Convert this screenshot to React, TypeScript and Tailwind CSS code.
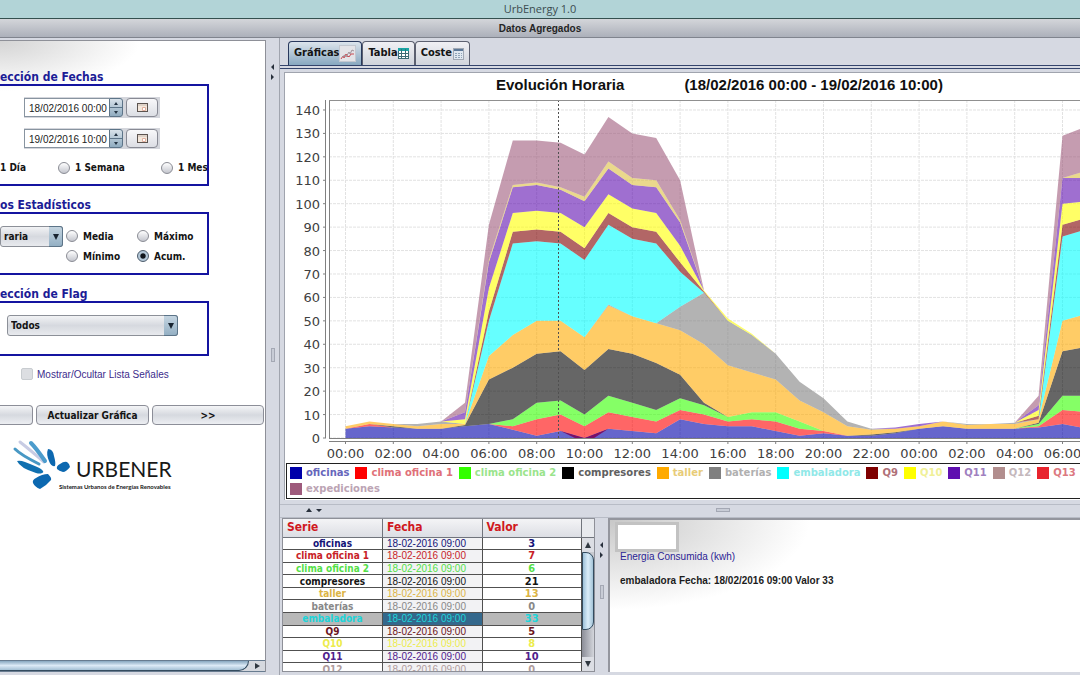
import { useState } from 'react';
import type { ReactNode } from 'react';

type Series = {
  name: string;
  color: string;
  label: string;
  value: number;
};

const SERIES: Series[] = [
  { name: 'oficinas', color: '#0000aa', label: 'text-[#6666bb]', value: 3 },
  { name: 'clima oficina 1', color: '#ff0000', label: 'text-[#e07078]', value: 7 },
  { name: 'clima oficina 2', color: '#33ff00', label: 'text-[#9ae48c]', value: 6 },
  { name: 'compresores', color: '#000000', label: 'text-[#606060]', value: 21 },
  { name: 'taller', color: '#ffaa00', label: 'text-[#e8cc78]', value: 13 },
  { name: 'baterías', color: '#808080', label: 'text-[#b0b0b0]', value: 0 },
  { name: 'embaladora', color: '#00ffff', label: 'text-[#90e8e8]', value: 33 },
  { name: 'Q9', color: '#7f0000', label: 'text-[#b07078]', value: 5 },
  { name: 'Q10', color: '#ffff00', label: 'text-[#f0f098]', value: 8 },
  { name: 'Q11', color: '#5f0fb0', label: 'text-[#a080c0]', value: 10 },
  { name: 'Q12', color: '#b28e8e', label: 'text-[#c4b8bc]', value: 0 },
  { name: 'Q13', color: '#e8242e', label: 'text-[#dc7880]', value: 1 },
];

// Fill of each stacked area, bottom to top
const AREA_COLORS = [
  '#0000aa',
  '#ff0000',
  '#33ff00',
  '#000000',
  '#ffaa00',
  '#808080',
  '#00ffff',
  '#7f0000',
  '#ffff00',
  '#5f0fb0',
  '#dcc040',
  '#9e5a7c',
];

// Cumulative top of each area, one row per hour
const STACK: number[][] = [
  [4, 4, 4, 4, 5, 5, 5, 5, 5, 5, 5, 5],
  [5, 6, 6, 6, 7, 7, 7, 7, 7, 7, 7, 7],
  [4.5, 4.5, 4.5, 5, 6, 6, 6, 6, 6, 6, 6, 6],
  [4, 4, 4, 4, 5, 6, 6, 6, 6, 6, 6, 6],
  [4, 4, 4, 4, 6, 7, 7, 7, 7, 7, 7, 7],
  [5, 5, 5, 5.5, 6, 6, 6, 6, 8, 11, 11, 15],
  [6, 6, 6, 25, 35, 35, 50, 54, 64, 75, 76, 91],
  [3.5, 5, 8, 30, 44, 44, 83, 88, 96, 107, 108, 127],
  [1, 8, 15, 36, 50, 50, 84, 89, 97, 108, 109, 127],
  [3, 10, 16, 37, 50, 50, 83, 88, 96, 106, 107, 126],
  [0, 5, 10, 29, 43, 43, 76, 81, 90, 101, 103, 121],
  [4, 11, 18, 38, 56.5, 57, 91, 96, 104, 115, 118, 137],
  [3, 9, 15, 36, 52, 52, 85, 90, 98, 108, 111, 130],
  [2, 7, 12, 32, 49, 49, 83, 88, 96, 107, 110, 128],
  [8, 12, 17, 27, 46, 56, 71, 75, 82, 92, 93, 110],
  [6, 10, 14, 15, 40, 62, 62, 62.5, 63, 63, 63, 63],
  [5, 7, 9, 9, 31, 50, 50, 50, 51, 51, 51, 51],
  [5, 8, 11, 11, 28, 44, 44, 44, 44.5, 44.5, 44.5, 44.5],
  [3, 7, 11, 11, 25, 36, 36, 36, 36, 36, 36, 36],
  [1, 4, 7, 7, 16, 24, 24, 24, 24, 24, 24, 24],
  [2, 3, 3, 3, 11, 17, 17, 17, 17, 17, 17, 17],
  [1, 1, 1, 1, 5, 7, 7, 7, 7, 7, 7, 7],
  [1, 1, 1, 1.5, 3.5, 4, 4, 4, 4, 4, 4, 4],
  [2, 2, 2, 2.5, 4, 4, 4, 4, 4, 4.5, 4.5, 4.5],
  [4, 4, 4, 4, 5, 5, 5, 5, 5, 6, 6, 6],
  [5, 5, 5, 5, 7, 7, 7, 7, 7, 7, 7, 7],
  [4, 4, 4, 4, 5.5, 6, 6, 6, 6, 6, 6, 6],
  [4, 4, 4, 4, 6, 6, 6, 6, 6, 6, 6, 6],
  [4, 4, 4, 4, 6, 6.5, 6.5, 6.5, 6.5, 6.5, 6.5, 6.5],
  [4.5, 5, 6, 6.5, 8, 8, 8, 9.5, 12, 14, 14, 18],
  [6, 12, 18, 37, 50, 50, 86, 91, 100, 111, 111, 129],
  [4, 11, 18, 39, 53, 53, 89, 94, 101, 111, 114, 133],
  [3, 10, 17, 38, 52, 52, 88, 93, 101, 111, 113, 131],
  [3, 9, 16, 37, 51, 51, 86, 91, 99, 109, 111, 129],
  [2, 8, 15, 36, 50, 50, 84, 89, 97, 107, 109, 127],
];

const PLOT_LEFT = 44;
const PLOT_TOP = 4;
const PLOT_BOTTOM = 342;

const hourX = (h: number) => 60.5 + h * 23.9;
const valueY = (v: number) => PLOT_BOTTOM - v * 2.343;

function areaPoints(index: number) {
  const top = STACK.map((row, h) => `${hourX(h)},${valueY(row[index])}`);
  const bottom = STACK.map(
    (row, h) => `${hourX(h)},${valueY(index === 0 ? 0 : row[index - 1])}`
  ).reverse();
  return [...top, ...bottom].join(' ');
}

const TICKS_Y = Array.from({ length: 15 }, (_, i) => i * 10);
const TICKS_X = Array.from({ length: 18 }, (_, i) => i * 2);

function EvolutionChart() {
  return (
    <svg
      className="block h-[367px] w-full font-['DejaVu_Sans',sans-serif]"
      role="img"
      aria-label="Evolución horaria"
    >
      {TICKS_Y.map((v) => (
        <g key={v}>
          <line x1={PLOT_LEFT} x2="100%" y1={valueY(v)} y2={valueY(v)} stroke="#e2e2e2" strokeDasharray="3 1" />
          <line x1="38" x2="41" y1={valueY(v)} y2={valueY(v)} stroke="#808080" />
          <text x="35" y={valueY(v) + 5} textAnchor="end" fontSize="13" fill="#404040">
            {v}
          </text>
        </g>
      ))}
      {TICKS_X.map((h) => (
        <g key={h}>
          <line x1={hourX(h)} x2={hourX(h)} y1={PLOT_TOP} y2={PLOT_BOTTOM} stroke="#e2e2e2" strokeDasharray="3 1" />
          <line x1={hourX(h)} x2={hourX(h)} y1="345" y2="348" stroke="#808080" />
          <text x={hourX(h)} y="362" textAnchor="middle" fontSize="13" fill="#404040">
            {`${String(h % 24).padStart(2, '0')}:00`}
          </text>
        </g>
      ))}

      {AREA_COLORS.map((color, i) => (
        <polygon key={color} points={areaPoints(i)} fill={color} fillOpacity="0.6" />
      ))}
      <polygon
        points={`${hourX(9)},${valueY(3)} ${hourX(10)},${valueY(0)} ${hourX(9.6)},${valueY(0)}`}
        fill="#7a1068"
      />
      <polygon
        points={`${hourX(10)},${valueY(0)} ${hourX(11)},${valueY(4)} ${hourX(10.4)},${valueY(0)}`}
        fill="#7a1068"
      />

      <line x1="273.5" x2="273.5" y1={PLOT_TOP} y2={PLOT_BOTTOM} stroke="#505050" strokeDasharray="2 2" />
      <path d={`M40.5 ${PLOT_TOP}V${PLOT_BOTTOM}M44.5 ${PLOT_TOP}V${PLOT_BOTTOM}`} stroke="#808080" />
      <line x1={PLOT_LEFT} x2="100%" y1="4.5" y2="4.5" stroke="#909090" />
      <line x1={PLOT_LEFT} x2="100%" y1="342.5" y2="342.5" stroke="#808080" />
      <line x1={PLOT_LEFT} x2="100%" y1="345.5" y2="345.5" stroke="#808080" />
    </svg>
  );
}

function LegendItem({ name, color, label }: { name: string; color: string; label: string }) {
  return (
    <li className="flex shrink-0 items-center gap-1">
      <span className="size-3" style={{ backgroundColor: color }} />
      <span className={label}>{name}</span>
    </li>
  );
}

function Legend() {
  return (
    <div className="ml-px overflow-hidden border border-r-0 border-[#202020] px-[3px] py-[2px] font-['DejaVu_Sans',sans-serif] text-[10px] leading-[14px] font-bold">
      <ul className="flex gap-[6px]">
        {SERIES.map((s) => (
          <LegendItem key={s.name} name={s.name} color={s.color} label={s.label} />
        ))}
      </ul>
      <ul className="mt-[2px] flex">
        <LegendItem name="expediciones" color="#9e5a7c" label="text-[#bca4b4]" />
      </ul>
    </div>
  );
}

function Section({ title, height, children }: { title: string; height: string; children: ReactNode }) {
  return (
    <section className="mb-3 w-[209px]">
      <h2 className="text-[12px] leading-[14px] font-bold text-[#1c1c96]">{title}</h2>
      <div className={`border-2 border-l-0 border-[#1414a0] ${height}`}>{children}</div>
    </section>
  );
}

function Radio({
  name,
  label,
  checked,
  onChange,
}: {
  name: string;
  label: string;
  checked: boolean;
  onChange: () => void;
}) {
  return (
    <label className="flex items-center gap-[5px] whitespace-nowrap">
      <input
        type="radio"
        name={name}
        checked={checked}
        onChange={onChange}
        className="size-3 shrink-0 appearance-none rounded-full border border-[#8a8c94] bg-linear-to-b from-white to-[#c4c6ce] checked:border-[#4c5c6c] checked:bg-radial checked:from-[#10161c] checked:from-30% checked:to-[#b4c8d8] checked:to-45%"
      />
      {label}
    </label>
  );
}

function Combo({ label, options, className }: { label: string; options: string[]; className: string }) {
  return (
    <div className={`relative h-[21px] ${className}`}>
      <select
        aria-label={label}
        className="size-full appearance-none rounded-[3px] border border-[#8c9098] bg-linear-to-b from-[#f2f3f5] via-[#d6d9df] to-[#e8eaee] pl-[3px] font-bold"
      >
        {options.map((o) => (
          <option key={o}>{o}</option>
        ))}
      </select>
      <span className="pointer-events-none absolute inset-y-0 right-0 flex w-[14px] items-center justify-center rounded-r-[3px] border border-l-0 border-[#5c7488] bg-linear-to-b from-[#c4d4e0] to-[#94b0c4]">
        <svg width="6" height="6" viewBox="0 0 6 6">
          <path d="M0 0h6L3 6z" fill="#182430" />
        </svg>
      </span>
    </div>
  );
}

function DateRow({ label, value }: { label: string; value: string }) {
  const [date, setDate] = useState(value);
  return (
    <div className="ml-6 flex h-[21px] w-[136px] items-center bg-[#d4d6dc]">
      <input
        type="text"
        aria-label={label}
        value={date}
        onChange={(e) => setDate(e.target.value)}
        className="h-[19px] w-[85px] border border-r-0 border-[#8894a0] bg-white pt-px pl-1 font-['Liberation_Sans',sans-serif] text-[10px] text-[#222]"
      />
      <div className="flex h-[19px] w-[14px] flex-col overflow-hidden rounded-r-[3px] border border-[#5c7488] bg-linear-to-b from-[#d8e2ea] to-[#90acc0]">
        <button type="button" aria-label="Incrementar" className="flex flex-1 items-center justify-center border-b border-[#5c7488]">
          <svg width="4" height="3"><path d="M0 3h4L2 0z" fill="#243444" /></svg>
        </button>
        <button type="button" aria-label="Decrementar" className="flex flex-1 items-center justify-center">
          <svg width="4" height="3"><path d="M0 0h4L2 3z" fill="#243444" /></svg>
        </button>
      </div>
      <button
        type="button"
        aria-label="Abrir calendario"
        className="ml-[3px] flex h-[19px] w-8 items-center justify-center rounded-[4px] border border-[#888a94] bg-linear-to-b from-[#f8f8fa] to-[#dcdee4]"
      >
        <svg width="11" height="9" viewBox="0 0 11 9">
          <rect x="0.5" y="0.5" width="10" height="8" fill="#f4e8dc" stroke="#5c5450" />
          <path d="M1 2h9" stroke="#c8bcb4" />
          <path d="M5.5 4.5h3v3h-3z" fill="#fff" stroke="#e0b0a0" />
        </svg>
      </button>
    </div>
  );
}

function PushButton({ label, children, className }: { label?: string; children?: ReactNode; className: string }) {
  return (
    <button
      type="button"
      aria-label={label}
      className={`h-5 border border-[#8c8e98] bg-linear-to-b from-[#f4f5f7] via-[#d6d9df] to-[#eceef2] font-bold ${className}`}
    >
      {children}
    </button>
  );
}

function Logo() {
  return (
    <svg width="175" height="56" viewBox="0 0 175 56" className="mt-3 block" role="img" aria-label="Urbener">
      <g strokeLinecap="round" fill="none">
        <path d="M15 12q6 6 24 15" stroke="#4898c4" strokeWidth="3" />
        <path d="M20 5q9 7 24 20" stroke="#c8cce4" strokeWidth="3" />
        <path d="M31 6q5 5 14 18" stroke="#4c9ccc" strokeWidth="4" />
      </g>
      <path d="M17 24q3-1 8 1 13 5 16 7 4 3 1 4-2 1-6 0-16-5-19-12z" fill="#1070b0" />
      <path d="M48 12q5 0 6 7 2 7 1 10-4 1-6-5-3-7-1-12z" fill="#0c68b0" />
      <path d="M57 32q-1-3 3-5 4-3 7-2 3 2 3 5-4 5-7 5-4-1-6-3z" fill="#0c68b0" />
      <path d="M33 46q-1-3 3-5 6-4 12-4 4 4 3 6-5 6-11 9-5-2-7-6z" fill="#0c68b0" />
      <text x="76" y="40" fontSize="21" fontFamily="Lato, sans-serif" fill="#181818">
        URBENER
      </text>
      <text x="59" y="52" fontSize="6" fontFamily="Lato, sans-serif" fontWeight="700" fill="#181818">
        Sistemas Urbanos de Energías Renovables
      </text>
    </svg>
  );
}

function Sidebar() {
  const [period, setPeriod] = useState('');
  const [stat, setStat] = useState('Acum.');

  return (
    <aside className="mt-[2px] mb-[3px] flex w-[266px] shrink-0 flex-col border-t border-r border-[#8e9098] bg-white text-[10px] text-[#141414]">
      <div className="min-h-0 flex-1 overflow-hidden bg-[radial-gradient(ellipse_140px_50px_at_0_0,#d4d4d4,#ffffff)] bg-no-repeat pt-[29px]">
        <Section title="ección de Fechas" height="h-[102px]">
          <div className="pt-[11px]">
            <DateRow label="Fecha inicial" value="18/02/2016 00:00" />
          </div>
          <div className="pt-[10px]">
            <DateRow label="Fecha final" value="19/02/2016 10:00" />
          </div>
          <div className="mt-[11px] flex overflow-hidden font-bold">
            <label className="w-[58px] shrink-0">
              <input
                type="radio"
                name="period"
                className="sr-only"
                checked={period === 'day'}
                onChange={() => setPeriod('day')}
              />
              1 Día
            </label>
            <div className="w-[103px] shrink-0">
              <Radio name="period" label="1 Semana" checked={period === 'week'} onChange={() => setPeriod('week')} />
            </div>
            <Radio name="period" label="1 Mes" checked={period === 'month'} onChange={() => setPeriod('month')} />
          </div>
        </Section>

        <Section title="os Estadísticos" height="h-[63px]">
          <div className="flex pt-3 font-bold">
            <Combo label="Agrupación" options={['raria', 'Diaria']} className="w-[63px] shrink-0" />
            <div className="ml-[3px] grid grid-cols-[71px_auto] grid-rows-[20px_20px] items-center">
              {['Media', 'Máximo', 'Mínimo', 'Acum.'].map((s) => (
                <Radio key={s} name="stat" label={s} checked={stat === s} onChange={() => setStat(s)} />
              ))}
            </div>
          </div>
        </Section>

        <Section title="ección de Flag" height="h-[55px]">
          <div className="pt-3 pl-[7px]">
            <Combo label="Flag" options={['Todos']} className="w-[171px]" />
          </div>
        </Section>

        <label className="ml-[21px] flex h-3 items-center gap-1 font-['Liberation_Sans',sans-serif] text-[#3c2c8c]">
          <input type="checkbox" disabled className="size-3 appearance-none rounded-[2px] border border-[#c8ccd0] bg-[#dcdee2]" />
          Mostrar/Ocultar Lista Señales
        </label>

        <div className="mt-[25px] flex gap-[3px]">
          <PushButton label="Anterior" className="w-[33px] rounded-r-[4px] border-l-0" />
          <PushButton className="w-[113px] rounded-[4px]">Actualizar Gráfica</PushButton>
          <PushButton className="w-[112px] rounded-[4px]">&gt;&gt;</PushButton>
        </div>

        <Logo />
      </div>

      {/* horizontal scroll bar */}
      <div className="flex h-3 border-t border-b border-[#687c90] bg-[#d6d9df]">
        <div className="flex-1 rounded-br-[12px] border-r border-b border-[#344c60] bg-linear-to-b from-[#88a8c0] via-[#dceaf6] to-[#a4c0d4]" />
        <button type="button" aria-label="Desplazar a la derecha" className="flex w-[16px] items-center justify-center">
          <svg width="5" height="6"><path d="M0 0l5 3-5 3z" fill="#303840" /></svg>
        </button>
      </div>
    </aside>
  );
}

function VerticalSplitter({ className }: { className: string }) {
  return (
    <div className={`flex shrink-0 flex-col items-center pb-[46px] ${className}`}>
      <svg width="5" height="16" viewBox="0 0 5 16">
        <path d="M4 0v6L1 3zM1 10v6l3-3z" fill="#28303c" />
      </svg>
      <div className="flex flex-1 items-center">
        <span className="h-[14px] w-1 border border-[#a4a8b4] bg-[#c8ccd6]" />
      </div>
    </div>
  );
}

function TabButton({
  active,
  onClick,
  children,
}: {
  active: boolean;
  onClick: () => void;
  children: ReactNode;
}) {
  return (
    <button
      type="button"
      role="tab"
      aria-selected={active}
      onClick={onClick}
      className={`flex h-6 items-center rounded-t-[4px] border border-b-0 px-[5px] text-[11px] font-bold text-[#141414] ${
        active
          ? 'border-[#28385c] bg-linear-to-b from-[#dce4ec] to-[#88a8c0]'
          : 'border-[#5c6070] bg-linear-to-b from-[#f0f0f4] to-[#d0d4dc]'
      }`}
    >
      {children}
    </button>
  );
}

function Tabs() {
  const [tab, setTab] = useState('graficas');
  return (
    <div role="tablist" className="flex border-b border-[#34446c] pt-[3px] pl-2">
      <TabButton active={tab === 'graficas'} onClick={() => setTab('graficas')}>
        Gráficas
        <svg width="17" height="17" viewBox="0 0 17 17">
          <rect x="0.5" y="0.5" width="16" height="16" fill="#e4e4e8" stroke="#c4c8d0" />
          <path d="M2 14l2-3 1 2 2-4 2 3 1-1M10 12l2-3h3" fill="none" stroke="#c84c54" />
          <path d="M3 12l3-2 1 2 3-5 1 2 2-4 2 1" fill="none" stroke="#a09098" />
        </svg>
      </TabButton>
      <TabButton active={tab === 'tabla'} onClick={() => setTab('tabla')}>
        Tabla
        <svg width="11" height="11" viewBox="0 0 11 11">
          <rect x="0.5" y="0.5" width="10" height="10" fill="#fff" stroke="#3c6c74" />
          <rect width="11" height="3" fill="#18a4a4" />
          <path d="M3.5 1v10M7.5 1v10M0 5.5h11M0 8.5h11" stroke="#3c6c74" />
        </svg>
      </TabButton>
      <TabButton active={tab === 'coste'} onClick={() => setTab('coste')}>
        Coste
        <svg width="11" height="12" viewBox="0 0 11 12" className="ml-px">
          <rect x="0.5" y="0.5" width="10" height="11" fill="#e0e8f0" stroke="#a0a8b4" />
          <rect x="1" y="1" width="9" height="2" fill="#5c7898" />
          <path d="M2 5.5h7M2 7.5h7M2 9.5h7" stroke="#90a4b8" strokeDasharray="2 1" />
        </svg>
      </TabButton>
    </div>
  );
}

const VALUE_TONES: Record<string, string> = {
  oficinas: 'text-[#141478]',
  'clima oficina 1': 'text-[#c81e28]',
  'clima oficina 2': 'text-[#54e048]',
  compresores: 'text-[#141414]',
  taller: 'text-[#dcb444]',
  baterías: 'text-[#888888]',
  embaladora: 'text-[#20d4d8] bg-[#b8b8b8]',
  Q9: 'text-[#6c1420]',
  Q10: 'text-[#ecec4c]',
  Q11: 'text-[#50208c]',
  Q12: 'text-[#b09c9c]',
};

function SeriesTable() {
  return (
    <div className="flex w-[313px] shrink-0 border border-[#8e9098] bg-white">
      <div className="h-[152px] flex-1 overflow-hidden">
        <table className="h-[157px] w-full table-fixed border-collapse text-center text-[10px] leading-[11px]">
          <thead>
            <tr className="h-[18px] bg-linear-to-b from-[#f4f4f6] to-[#dcdee4] text-left text-[12px] text-[#d01820]">
              {['Serie', 'Fecha', 'Valor'].map((h) => (
                <th key={h} className="border-r border-b border-[#70747c] p-0 pl-1">
                  {h}
                </th>
              ))}
            </tr>
          </thead>
          <tbody>
            {SERIES.slice(0, 11).map((s) => (
              <tr key={s.name} className={`border-b border-[#505050] ${VALUE_TONES[s.name]}`}>
                <th scope="row" className="border-r border-[#505050] p-0">
                  {s.name}
                </th>
                <td
                  className={`border-r border-[#505050] p-0 pl-1 text-left font-['Liberation_Sans',sans-serif] ${
                    s.name === 'embaladora' ? 'bg-[#34688c]' : 'bg-[#f2f2f4]'
                  }`}
                >
                  18-02-2016 09:00
                </td>
                <td className="border-r border-[#505050] p-0 text-[11px] font-bold">{s.value}</td>
              </tr>
            ))}
          </tbody>
        </table>
      </div>
      <div className="flex w-3 flex-col bg-[#c8cad0]">
        <span className="h-[19px] border-b border-[#70747c] bg-[#e8eaee]" />
        <button type="button" aria-label="Subir" className="flex h-[14px] items-center justify-center bg-[#dcdee4]">
          <svg width="6" height="6"><path d="M0 6h6L3 0z" fill="#303840" /></svg>
        </button>
        <span className="h-[78px] rounded-r-[8px] border border-[#344c60] bg-linear-to-r from-[#9cc0d8] via-[#dceefa] to-[#a4c4d8]" />
        <span className="flex-1 bg-linear-to-r from-[#8c8e98] to-[#d4d6dc]" />
        <button type="button" aria-label="Bajar" className="flex h-[14px] items-center justify-center bg-[#dcdee4]">
          <svg width="6" height="6"><path d="M0 0h6L3 6z" fill="#303840" /></svg>
        </button>
      </div>
    </div>
  );
}

export default function App() {
  return (
    <div className="flex h-screen flex-col overflow-hidden bg-[#d6d9e2] font-['DejaVu_Sans_Condensed','DejaVu_Sans',sans-serif]">
      <header className="h-[19px] border-b border-[#34504f] bg-[#b2d4d7] text-center font-['Open_Sans',sans-serif] text-[11px] leading-[18px] text-[#3c4c50]">
        UrbEnergy 1.0
      </header>
      <h1 className="h-[19px] border-b border-[#80848e] bg-linear-to-b from-[#d4d6da] to-[#acb0ba] text-center font-['Liberation_Sans',sans-serif] text-[10px] leading-[20px] font-bold text-[#242424]">
        Datos Agregados
      </h1>

      <div className="flex min-h-0 flex-1">
        <Sidebar />
        <VerticalSplitter className="w-[14px] border-r border-[#a0a4ae] pt-[26px]" />

        <main className="flex min-w-0 flex-1 flex-col">
          <Tabs />
          <div className="mt-[2px] border-t border-[#34446c]" />

          <section className="mt-[3px] ml-1 border-t border-l border-[#a0a4ae] bg-white pb-px">
            <h2 className="flex h-[23px] gap-[60px] overflow-hidden pl-[211px] font-['Liberation_Sans',sans-serif] text-[15px] leading-[23px] font-bold whitespace-nowrap text-[#101010]">
              <span>Evolución Horaria</span>
              <span>(18/02/2016 00:00 - 19/02/2016 10:00)</span>
            </h2>
            <EvolutionChart />
            <Legend />
          </section>

          <div className="mt-1 flex h-[14px] shrink-0 items-start border-t border-b border-[#b8bcc6] pt-[3px]">
            <svg width="16" height="5" viewBox="0 0 16 5" className="ml-[26px]">
              <path d="M0 4h6L3 0zM10 1h6l-3 3z" fill="#28303c" />
            </svg>
            <div className="flex flex-1 justify-center pl-11">
              <span className="h-1 w-[14px] border border-[#a4a8b4] bg-[#c8ccd6]" />
            </div>
          </div>

          <div className="flex min-h-0 flex-1 pb-[3px] pl-[2px]">
            <SeriesTable />
            <VerticalSplitter className="w-[13px] pt-6" />
            <section className="min-w-0 flex-1 border-t-2 border-l-2 border-[#94969e] bg-white bg-[radial-gradient(ellipse_200px_90px_at_0_0,#c8c8c8,#ffffff)] pt-[2px] pl-[5px]">
              <div className="h-[30px] w-[64px] border-[3px] border-[#c2c2c2] bg-white" />
              <p className="pl-[5px] font-['Liberation_Sans',sans-serif] text-[10px] leading-[10px] text-[#2c2494]">
                Energia Consumida (kwh)
              </p>
              <p className="mt-3 pl-[5px] font-['Liberation_Sans',sans-serif] text-[10px] leading-[14px] font-bold text-[#1c1c1c]">
                embaladora Fecha: 18/02/2016 09:00 Valor 33
              </p>
            </section>
          </div>
        </main>
      </div>
    </div>
  );
}
